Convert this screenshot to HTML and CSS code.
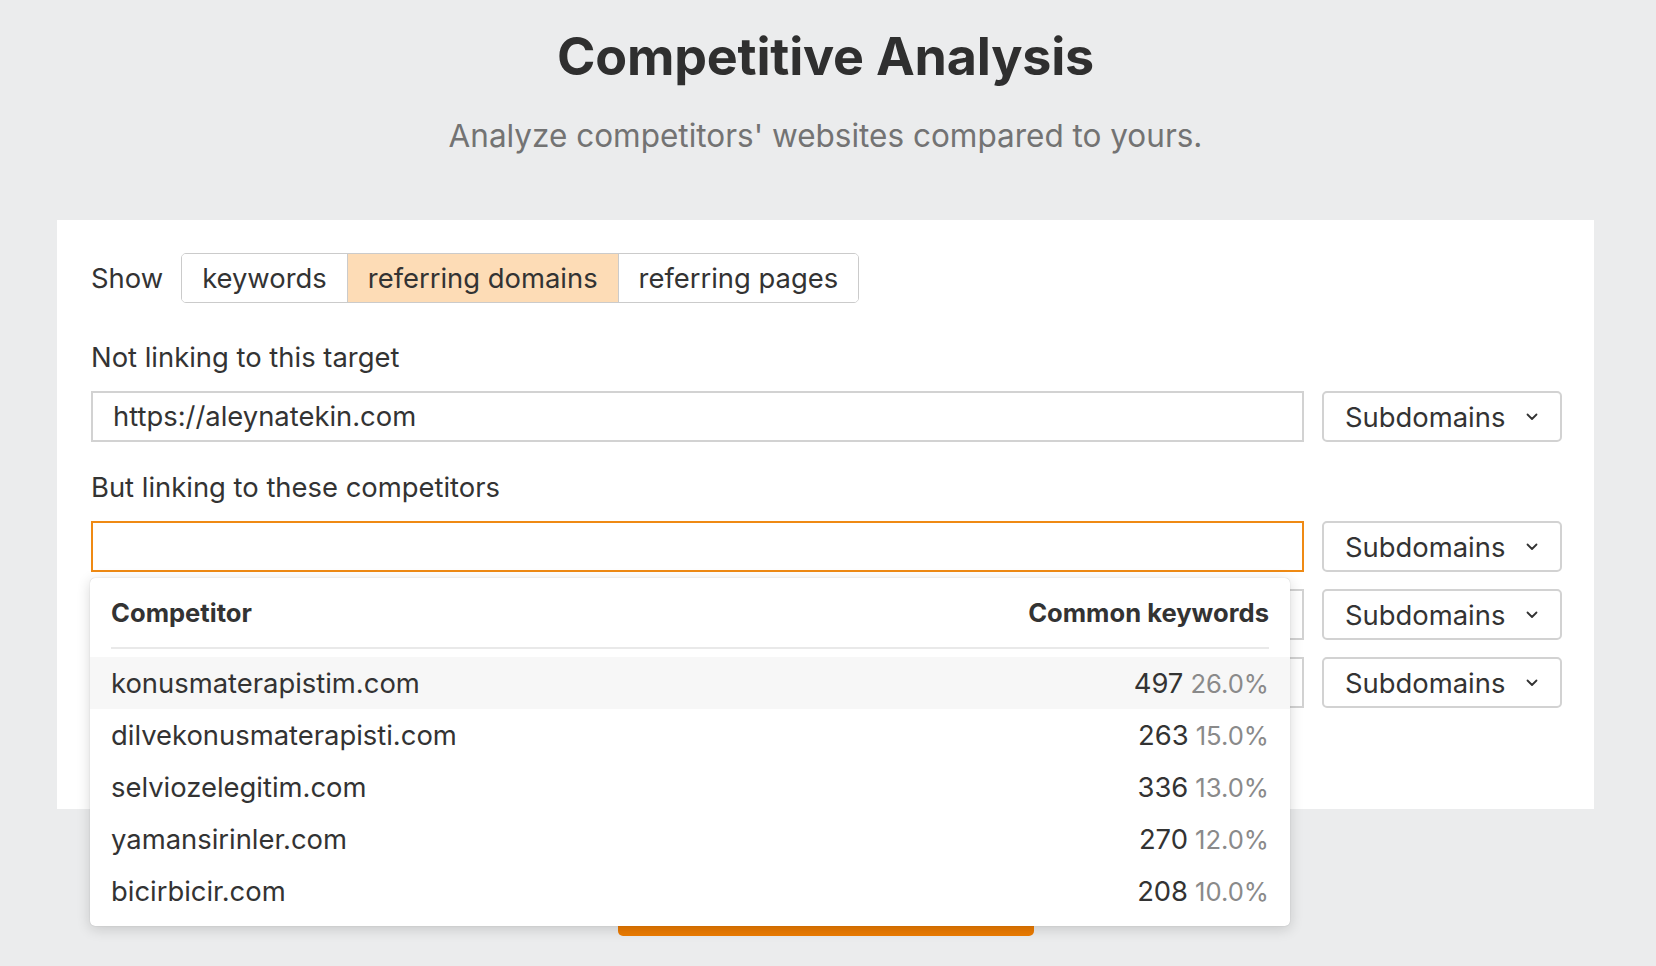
FILE: index.html
```html
<!DOCTYPE html>
<html lang="en">
<head>
<meta charset="utf-8">
<title>Competitive Analysis</title>
<link rel="stylesheet" href="styles.css">
</head>
<body>
<div class="page">
  <h1 class="title">Competitive Analysis</h1>
  <p class="subtitle">Analyze competitors' websites compared to yours.</p>

  <section class="card">
    <div class="show-row">
      <span class="show-label">Show</span>
      <div class="segmented">
        <button class="seg">keywords</button>
        <button class="seg active">referring domains</button>
        <button class="seg">referring pages</button>
      </div>
    </div>

    <div class="field-label first">Not linking to this target</div>
    <div class="input-row">
      <div class="text-input">https://aleynatekin.com</div>
      <div class="select">Subdomains <svg class="chev" width="12" height="8" viewBox="0 0 12 8"><polyline points="1.5,1.5 6,6 10.5,1.5" fill="none" stroke="#333" stroke-width="1.8" stroke-linecap="round" stroke-linejoin="round"/></svg></div>
    </div>

    <div class="field-label second">But linking to these competitors</div>
    <div class="rows">
      <div class="input-row anchor">
        <div class="text-input focused"></div>
        <div class="select">Subdomains <svg class="chev" width="12" height="8" viewBox="0 0 12 8"><polyline points="1.5,1.5 6,6 10.5,1.5" fill="none" stroke="#333" stroke-width="1.8" stroke-linecap="round" stroke-linejoin="round"/></svg></div>

        <div class="dropdown">
          <div class="dd-head">
            <span>Competitor</span>
            <span>Common keywords</span>
          </div>
          <div class="dd-row hover"><span>konusmaterapistim.com</span><span><span class="num">497</span><span class="pct">26.0%</span></span></div>
          <div class="dd-row"><span>dilvekonusmaterapisti.com</span><span><span class="num">263</span><span class="pct">15.0%</span></span></div>
          <div class="dd-row"><span>selviozelegitim.com</span><span><span class="num">336</span><span class="pct">13.0%</span></span></div>
          <div class="dd-row"><span>yamansirinler.com</span><span><span class="num">270</span><span class="pct">12.0%</span></span></div>
          <div class="dd-row"><span>bicirbicir.com</span><span><span class="num">208</span><span class="pct">10.0%</span></span></div>
        </div>
      </div>
      <div class="input-row">
        <div class="text-input"></div>
        <div class="select">Subdomains <svg class="chev" width="12" height="8" viewBox="0 0 12 8"><polyline points="1.5,1.5 6,6 10.5,1.5" fill="none" stroke="#333" stroke-width="1.8" stroke-linecap="round" stroke-linejoin="round"/></svg></div>
      </div>
      <div class="input-row">
        <div class="text-input"></div>
        <div class="select">Subdomains <svg class="chev" width="12" height="8" viewBox="0 0 12 8"><polyline points="1.5,1.5 6,6 10.5,1.5" fill="none" stroke="#333" stroke-width="1.8" stroke-linecap="round" stroke-linejoin="round"/></svg></div>
      </div>
    </div>
  </section>

  <div class="actions">
    <button class="primary">Show link opportunities</button>
  </div>
</div>
</body>
</html>
```

FILE: styles.css
```css
* { box-sizing: border-box; }

html, body { height: 100%; }

body {
  margin: 0;
  background: #ebeced;
  font-family: Inter, "Noto Sans", sans-serif;
  color: #333;
  overflow: hidden;
}

.page {
  padding: 25px 62px 0 57px;
}

.title {
  margin: 0;
  text-align: center;
  font-size: 52px;
  line-height: 63px;
  font-weight: 700;
  color: #2f2f2f;
  letter-spacing: -0.2px;
}

.subtitle {
  margin: 30px 0 0;
  text-align: center;
  font-size: 31.5px;
  line-height: 36px;
  color: #737373;
}

.card {
  margin-top: 66px;
  background: #fff;
  padding: 33px 32px 101px 34px;
}

.show-row {
  display: flex;
  align-items: center;
  gap: 18px;
}

.show-label {
  font-size: 27.4px;
}

.segmented {
  display: flex;
  border: 1px solid #cbcbcb;
  border-radius: 5px;
  overflow: hidden;
}

.seg {
  font-family: inherit;
  font-size: 27.4px;
  line-height: 48px;
  padding: 0 20px;
  border: 0;
  background: #fff;
  color: #333;
}

.seg + .seg {
  border-left: 1px solid #cbcbcb;
}

.seg.active {
  background: #fddcb6;
}

.field-label {
  font-size: 27.4px;
  line-height: 34px;
  margin-bottom: 17px;
}

.field-label.first { margin-top: 37px; }
.field-label.second { margin-top: 28px; }

.rows {
  display: flex;
  flex-direction: column;
  gap: 17px;
}

.input-row {
  display: flex;
  gap: 18px;
  height: 51px;
}

.input-row.anchor {
  position: relative;
}

.text-input {
  flex: 1;
  border: 2px solid #d2d2d2;
  background: #fff;
  padding: 0 20px;
  font-size: 27.4px;
  line-height: 47px;
  color: #333;
}

.text-input.focused {
  border-color: #ef8a14;
}

.select {
  width: 240px;
  border: 2px solid #d2d2d2;
  border-radius: 5px;
  display: flex;
  align-items: center;
  justify-content: space-between;
  padding: 0 22px 0 21px;
  font-size: 27.4px;
  color: #333;
  background: #fff;
}

.chev { display: block; }

.dropdown {
  position: absolute;
  top: calc(100% + 6px);
  left: -1px;
  width: 1200px;
  background: #fff;
  border-radius: 5px;
  box-shadow: 0 0 1px rgba(0,0,0,0.25), 0 3px 14px rgba(0,0,0,0.16);
  padding-bottom: 9px;
  z-index: 5;
}

.dd-head {
  display: flex;
  justify-content: space-between;
  align-items: center;
  height: 71px;
  margin: 0 21px 8px;
  border-bottom: 2px solid #e9e9e9;
  font-size: 25.6px;
  font-weight: 700;
  color: #333;
}

.dd-row {
  display: flex;
  justify-content: space-between;
  align-items: center;
  height: 52px;
  padding: 0 21px;
  font-size: 27.4px;
  color: #333;
}

.dd-row.hover {
  background: #f7f7f7;
}

.pct {
  color: #8a8a8a;
  font-size: 25.6px;
  margin-left: 7px;
}

.actions {
  display: flex;
  justify-content: center;
  margin-top: 57px;
}

.primary {
  width: 416px;
  height: 70px;
  border: 0;
  border-radius: 5px;
  background: #ec7b00;
  color: #fff;
  font-family: inherit;
  font-size: 26px;
  font-weight: 700;
}
```
